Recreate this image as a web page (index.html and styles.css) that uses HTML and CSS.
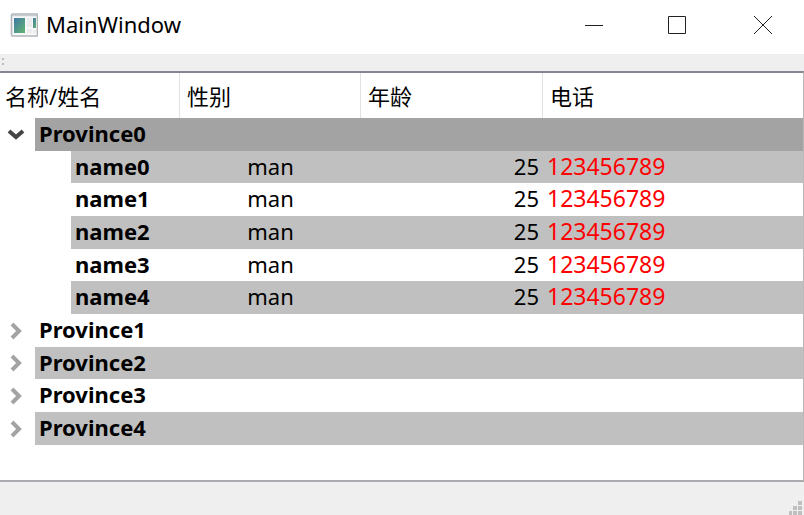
FILE: index.html
```html
<!DOCTYPE html>
<html lang="zh-CN">
<head>
<meta charset="utf-8">
<title>MainWindow</title>
<link rel="stylesheet" href="styles.css">
</head>
<body>
<div class="window">
  <header class="titlebar">
    <svg class="app-icon" width="28" height="24" viewBox="0 0 28 24" aria-hidden="true">
      <defs>
        <linearGradient id="pane" x1="0" y1="0" x2="1" y2="1"><stop offset="0" stop-color="#3f78a8"/><stop offset="1" stop-color="#62b56f"/></linearGradient>
      </defs>
      <rect x="1.500" y="1" width="26" height="22" rx="1" fill="#f7f8f9" stroke="#b0b5b9" stroke-width="1.600"/>
      <path d="M2 2.500h25" stroke="#c6cbd0" stroke-width="1.500"/>
      <rect x="4" y="5" width="11" height="15" fill="url(#pane)"/>
      <path d="M17 5h5v9h-5zM17 16h5v4h-5z" fill="#ececec"/>
      <rect x="23" y="5" width="3" height="10" fill="url(#pane)"/>
      <path d="M23 17h3v3h-3z" fill="#ececec"/>
    </svg>
    <h1 class="title">MainWindow</h1>
    <div class="controls">
      <button type="button" aria-label="Minimize"><svg width="20" height="20" viewBox="0 0 20 20"><path d="M1 10.500h18"/></svg></button>
      <button type="button" aria-label="Maximize"><svg width="20" height="20" viewBox="0 0 20 20"><path d="M.5 1.500h17v17h-17z"/></svg></button>
      <button type="button" aria-label="Close"><svg width="20" height="20" viewBox="0 0 20 20"><path d="M2 1l18 18M20 1L2 19"/></svg></button>
    </div>
  </header>
  <div class="toolbar"><svg width="4" height="10" viewBox="0 0 4 10" aria-hidden="true"><path d="M0 1h2v2H0zM0 6h2v2H0z" fill="#bcbcbc"/></svg></div>
  <main class="view">
    <table class="tree">
      <colgroup><col class="c-name"><col class="c-sex"><col class="c-age"><col></colgroup>
      <thead><tr><th>名称/姓名</th><th>性别</th><th>年龄</th><th>电话</th></tr></thead>
      <tbody>
        <tr class="province selected"><td><div class="node"><button type="button" class="toggle open" aria-label="Collapse Province0"><svg width="18" height="18" viewBox="0 0 18 18"><path d="M2 5l7 6 7-6"/></svg></button><span>Province0</span></div></td><td></td><td></td><td></td></tr>
        <tr class="person shaded"><td><div class="node"><span>name0</span></div></td><td>man</td><td>25</td><td>123456789</td></tr>
        <tr class="person"><td><div class="node"><span>name1</span></div></td><td>man</td><td>25</td><td>123456789</td></tr>
        <tr class="person shaded"><td><div class="node"><span>name2</span></div></td><td>man</td><td>25</td><td>123456789</td></tr>
        <tr class="person"><td><div class="node"><span>name3</span></div></td><td>man</td><td>25</td><td>123456789</td></tr>
        <tr class="person shaded"><td><div class="node"><span>name4</span></div></td><td>man</td><td>25</td><td>123456789</td></tr>
        <tr class="province"><td><div class="node"><button type="button" class="toggle" aria-label="Expand Province1"><svg width="18" height="18" viewBox="0 0 18 18"><path d="M5 2l7 7-7 7"/></svg></button><span>Province1</span></div></td><td></td><td></td><td></td></tr>
        <tr class="province shaded"><td><div class="node"><button type="button" class="toggle" aria-label="Expand Province2"><svg width="18" height="18" viewBox="0 0 18 18"><path d="M5 2l7 7-7 7"/></svg></button><span>Province2</span></div></td><td></td><td></td><td></td></tr>
        <tr class="province"><td><div class="node"><button type="button" class="toggle" aria-label="Expand Province3"><svg width="18" height="18" viewBox="0 0 18 18"><path d="M5 2l7 7-7 7"/></svg></button><span>Province3</span></div></td><td></td><td></td><td></td></tr>
        <tr class="province shaded"><td><div class="node"><button type="button" class="toggle" aria-label="Expand Province4"><svg width="18" height="18" viewBox="0 0 18 18"><path d="M5 2l7 7-7 7"/></svg></button><span>Province4</span></div></td><td></td><td></td><td></td></tr>
      </tbody>
    </table>
  </main>
  <footer class="statusbar"><svg width="14" height="14" viewBox="0 0 14 14" aria-hidden="true"><path d="M9 0h4v4H9zM4 5h4v4H4zM9 5h4v4H9zM0 10h3v4H0zM4 10h4v4H4zM9 10h4v4H9z" fill="#bfbfbf"/></svg></footer>
</div>
</body>
</html>
```

FILE: styles.css
```css
* { box-sizing: border-box; }

body {
  margin: 0;
  background: #fff;
  color: #000;
  font: 22px/30px "Noto Sans", "Noto Sans CJK SC", sans-serif;
}

.window {
  display: flex;
  flex-direction: column;
  min-height: 100vh;
}

.titlebar {
  display: flex;
  align-items: center;
  height: 54px;
  padding: 0 0 4px 10px;
}

.app-icon { margin-right: 8px; }

.title {
  flex: 1;
  margin: 0;
  padding-bottom: 2px;
  font-size: 22px;
  font-weight: 400;
}

.controls { display: flex; }

button {
  display: flex;
  align-items: center;
  justify-content: center;
  padding: 0;
  border: 0;
  background: none;
}

.controls button {
  width: 84px;
  height: 50px;
}

.controls svg {
  fill: none;
  stroke: #222;
  stroke-width: 1;
}

.toolbar {
  display: flex;
  height: 17px;
  padding: 3px 2px;
  background: #efefef;
}

.view {
  flex: 1;
  border: 1px solid #a0a0a0;
  border-width: 2px 1px 2px 0;
  border-color: #828790 #b8b8b8 #a9a9ae;
}

.tree {
  width: 100%;
  table-layout: fixed;
  border-collapse: separate;
  border-spacing: 0;
}

.c-name { width: 180px; }
.c-sex { width: 181px; }
.c-age { width: 182px; }

th {
  height: 45px;
  padding: 0 7px;
  border-right: 1px solid #e2e2e2;
  font-weight: 400;
  text-align: left;
}

th:first-child { padding-left: 5px; }
th:last-child { border-right: 0; }

td {
  height: 33px;
  padding: 0 4px;
  vertical-align: top;
}

td:first-child { padding: 0; }
td:nth-child(2) { text-align: center; }
td:nth-child(3) { text-align: right; }

td:nth-child(4) {
  color: #f00;
  font-size: 23px;
}

tr:nth-child(3n + 2) td { height: 32px; }

.node {
  display: flex;
  height: 100%;
  font-weight: 700;
}

.node span {
  flex: 1;
  padding-left: 4px;
}

.person .node { padding-left: 71px; }

.shaded td:not(:first-child),
.shaded .node span { background: #c0c0c0; }

.selected td:not(:first-child),
.selected .node span { background: #a3a3a3; }

.toggle {
  width: 35px;
  padding-right: 3px;
}

.toggle svg {
  fill: none;
  stroke: #a3a3a3;
  stroke-width: 4;
}

.toggle.open svg { stroke: #444; }

.statusbar {
  display: flex;
  align-items: flex-end;
  justify-content: flex-end;
  height: 33px;
  padding-right: 1px;
  background: #efefef;
}
```
